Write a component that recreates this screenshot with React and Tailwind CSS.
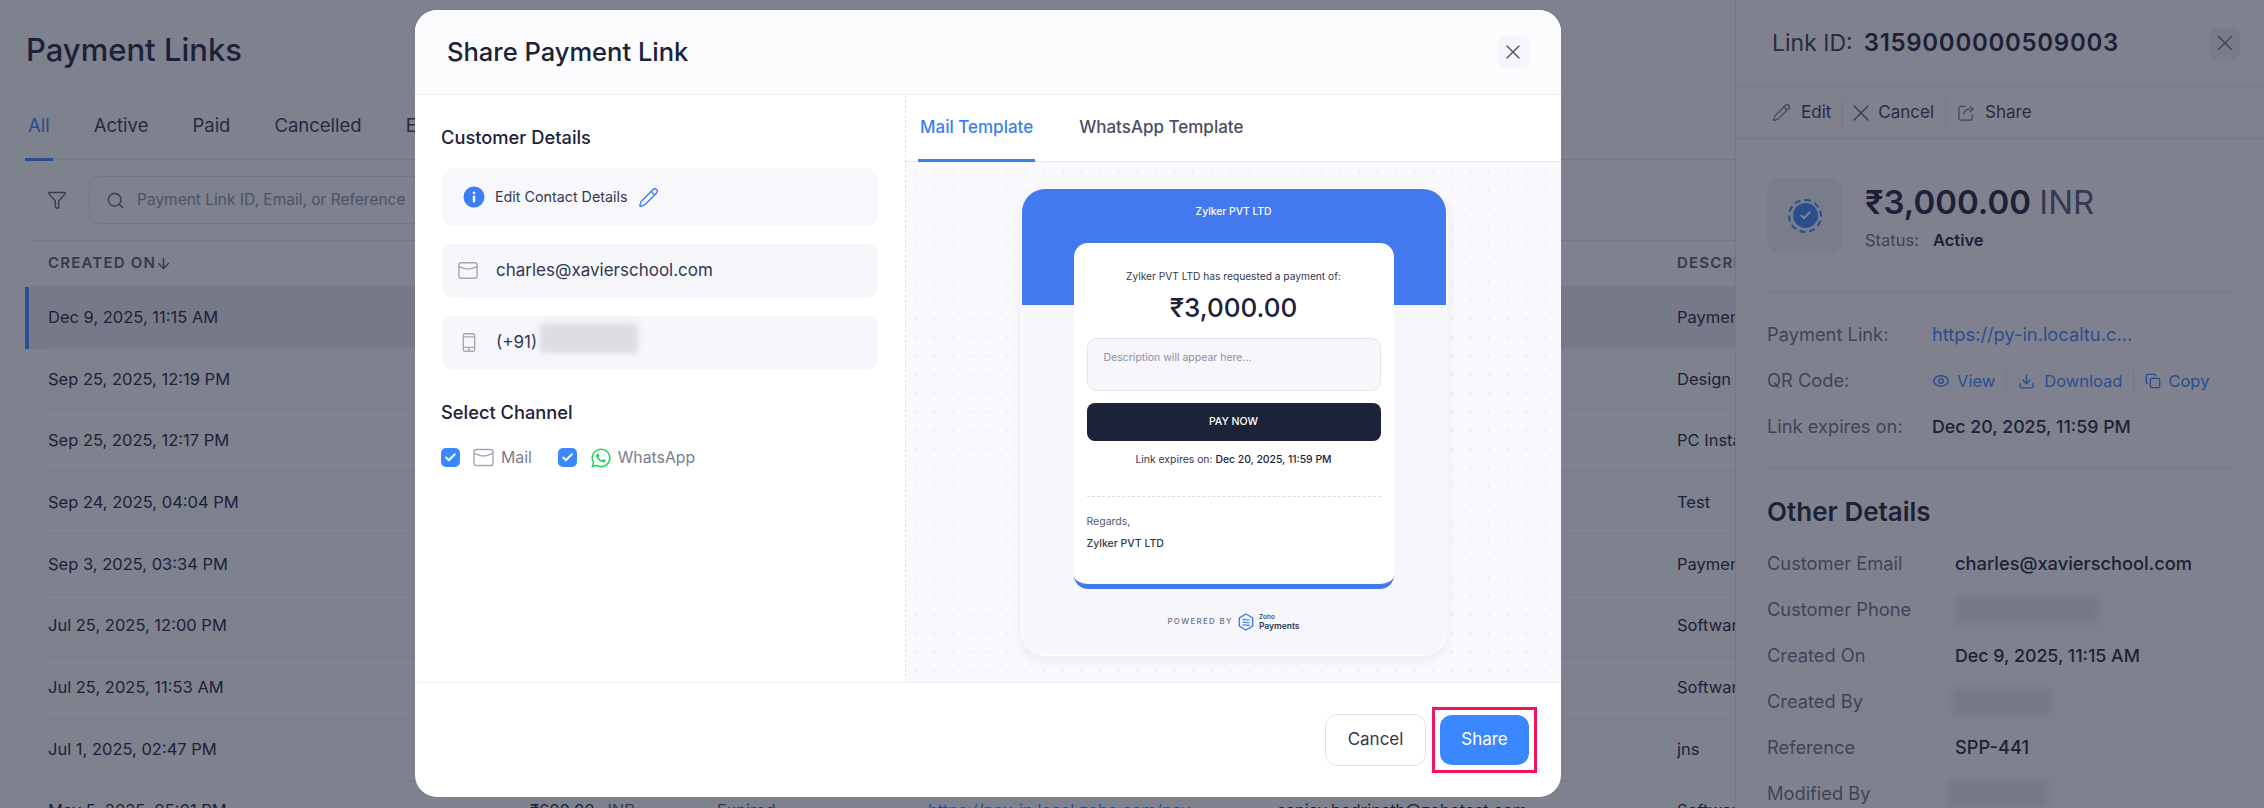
import React from "react";
import { ArrowDown, Check, Copy, Download, Eye, Funnel, Pencil, Search, X } from "lucide-react";
import { FaWhatsapp } from "react-icons/fa";

const tabs = ["All", "Active", "Paid", "Cancelled", "Expired"];

const rows = [
  { date: "Dec 9, 2025, 11:15 AM", desc: "Payment", selected: true },
  { date: "Sep 25, 2025, 12:19 PM", desc: "Design" },
  { date: "Sep 25, 2025, 12:17 PM", desc: "PC Install" },
  { date: "Sep 24, 2025, 04:04 PM", desc: "Test" },
  { date: "Sep 3, 2025, 03:34 PM", desc: "Payment" },
  { date: "Jul 25, 2025, 12:00 PM", desc: "Software" },
  { date: "Jul 25, 2025, 11:53 AM", desc: "Software" },
  { date: "Jul 1, 2025, 02:47 PM", desc: "jns" },
  {
    date: "May 5, 2025, 05:01 PM",
    amount: "₹600.00",
    status: "Expired",
    link: "https://pay-in.local.zoho.com/pay",
    email: "sanjay.badrinath@zohotest.com",
    desc: "Software",
  },
];

const MailIcon = ({ className }) => (
  <svg viewBox="0 0 22 20" fill="none" stroke="currentColor" strokeWidth="1.5" className={className}>
    <rect x="1" y="1.5" width="20" height="17" rx="2.5" />
    <path d="M1 5.5c3 1.6 6.5 3 10 3s7-1.400 10-3" />
  </svg>
);

const PhoneIcon = ({ className }) => (
  <svg viewBox="0 0 16 22" fill="none" stroke="currentColor" strokeWidth="1.5" className={className}>
    <rect x="1.500" y="1" width="13" height="20" rx="2" />
    <path d="M1.500 4.500h13M1.500 16.500h13" />
    <circle cx="8" cy="18.800" r="0.600" fill="currentColor" />
  </svg>
);

const InfoIcon = () => (
  <svg viewBox="0 0 22 22" className="h-[22px] w-[22px] shrink-0">
    <circle cx="11" cy="11" r="10.500" fill="#3b7ff5" />
    <circle cx="11" cy="6.800" r="1.400" fill="#fff" />
    <rect x="9.800" y="9.600" width="2.400" height="6.800" rx="1" fill="#fff" />
  </svg>
);

const ShareIcon = () => (
  <svg viewBox="0 0 18 18" fill="none" stroke="currentColor" strokeWidth="1.3" className="h-[17px] w-[17px]">
    <path d="M8 2.500H3a2 2 0 0 0-2 2V15a2 2 0 0 0 2 2h10a2 2 0 0 0 2-2v-4" />
    <path d="M6 11c.5-3.500 3-5.500 7-5.500M12.500 2.500l3.500 3-3.500 3" />
  </svg>
);

const ZohoLogo = () => (
  <svg viewBox="0 0 18 20" fill="none" className="h-[18px] w-[16px]">
    <path d="M9 1l7.500 4.300v9.400L9 19l-7.500-4.300V5.300z" stroke="#3b7ff5" strokeWidth="1.600" />
    <path d="M5 7.500c3-1.500 5 1.500 8 0M5 10.500c3-1.500 5 1.500 8 0M5 13.500c3-1.500 5 1.500 8 0" stroke="#3b7ff5" strokeWidth="1.300" />
  </svg>
);

const Checkbox = () => (
  <span className="flex h-[19px] w-[19px] items-center justify-center rounded-[5px] bg-[#3b87ff]">
    <Check size={13} strokeWidth={3.500} className="text-white" />
  </span>
);

const DetailRow = ({ label, width, children }) => (
  <div className="flex h-[46px] items-center">
    <span className={`${width} shrink-0 text-[#6b6f84]`}>{label}</span>
    {children}
  </div>
);

const PageBehind = () => (
  <main className="h-full min-w-0 flex-1 overflow-hidden bg-[#fdfdff] whitespace-nowrap text-[#1c2237]">
    <h1 className="flex h-[100px] items-center pl-[26px] text-[31px] font-medium">Payment Links</h1>

    <div className="ml-[25px] flex h-[60px] gap-[38px] border-b border-[#e6e7ee] text-[18.500px]">
      {tabs.map((t, i) => (
        <div
          key={t}
          className={`h-[61px] border-b-[3px] px-[3px] pt-[12px] ${i === 0 ? "border-[#3b87ff] text-[#3b87ff]" : "border-transparent text-[#33374e]"}`}
        >
          {t}
        </div>
      ))}
    </div>

    <div className="ml-[29px] flex h-[81px] items-center gap-[22px] border-b border-[#e6e7ee] pl-[18px]">
      <Funnel size={20} strokeWidth={1.700} className="text-[#5a5e75]" />
      <div className="flex h-[48px] w-[640px] items-center gap-[12px] rounded-[10px] border border-[#e3e4ec] pl-[16px] text-[15.500px] text-[#8d90a3]">
        <Search size={19} className="text-[#6b6f84]" />
        Payment Link ID, Email, or Reference
      </div>
    </div>

    <div className="ml-[29px] flex h-[46px] items-center border-b border-[#e6e7ee] pl-[19px] text-[15px] font-semibold tracking-[1.200px] text-[#55596f]">
      <span className="flex w-[1629px] shrink-0 items-center">
        CREATED ON
        <ArrowDown size={17} className="-ml-[1px]" />
      </span>
      <span>DESCRIPTION</span>
    </div>

    {rows.map((r) => (
      <div
        key={r.date}
        className={`ml-[25px] flex h-[61.700px] items-center border-l-4 pl-[19px] text-[16.500px] ${r.selected ? "border-l-[#3b87ff] bg-[#ebecf2]" : "border-l-transparent"}`}
      >
        <div className="flex h-full flex-1 items-center border-b border-[#eef0f5]">
          <span className="w-[482px] shrink-0">{r.date}</span>
          <span className="w-[187px] shrink-0">
            {r.amount && (
              <>
                {r.amount} <span className="ml-[8px] text-[#55596f]">INR</span>
              </>
            )}
          </span>
          <span className="w-[211px] shrink-0 text-[#55596f]">{r.status}</span>
          <span className="w-[349px] shrink-0 text-[#3b87ff]">{r.link}</span>
          <span className="w-[400px] shrink-0">{r.email}</span>
          <span className="shrink-0">{r.desc}</span>
        </div>
      </div>
    ))}
  </main>
);

const DetailPanel = () => (
  <aside className="flex h-full w-[529px] shrink-0 flex-col border-l border-[#e6e7ee] bg-white whitespace-nowrap text-[#1c2237]">
    <div className="flex h-[86px] shrink-0 items-center justify-between pr-[24px] pl-[36px] text-[23px]">
      <div className="flex items-baseline">
        <span className="text-[#33374e]">Link ID:</span>
        <span className="ml-[11px] text-[24px] font-semibold tracking-[0.700px]">3159000000509003</span>
      </div>
      <span className="flex h-[31px] w-[31px] items-center justify-center rounded-[8px] bg-[#eeeff5]">
        <X size={26} strokeWidth={1.300} className="text-[#6b6f84]" />
      </span>
    </div>

    <div className="flex h-[53px] shrink-0 items-center border-y border-[#e6e7ee] pl-[36px] text-[17px] text-[#33374e]">
      <span className="flex items-center gap-[10px] pr-[11px]">
        <Pencil size={19} className="text-[#6b6f84]" strokeWidth={1.400} />
        Edit
      </span>
      <span className="flex h-[30px] items-center gap-[10px] border-l border-[#e6e7ee] px-[11px]">
        <X size={28} className="-mx-[7px] text-[#55596f]" strokeWidth={1.200} />
        Cancel
      </span>
      <span className="flex h-[30px] items-center gap-[10px] border-l border-[#e6e7ee] pl-[12px] [&>svg]:text-[#6b6f84]">
        <ShareIcon />
        Share
      </span>
    </div>

    <div className="pr-[28px] pl-[31px] text-[18.300px]">
      <div className="flex h-[154px] gap-[22px] border-b border-[#e6e7ee] pt-[39px]">
        <div className="flex h-[75px] w-[76px] items-center justify-center rounded-[14px] bg-[#f0f1f6]">
          <span className="flex h-[34px] w-[34px] items-center justify-center rounded-full border-2 border-dashed border-[#3b87ff]">
            <span className="flex h-[25px] w-[25px] items-center justify-center rounded-full bg-[#3b87ff]">
              <Check size={13} strokeWidth={3.500} className="text-white" />
            </span>
          </span>
        </div>
        <div>
          <div className="mt-[4px] text-[33px] leading-[40px] font-semibold">
            ₹3,000.00 <span className="font-normal text-[#55596f]">INR</span>
          </div>
          <div className="mt-[6px] text-[16.500px]">
            <span className="text-[#6b6f84]">Status:</span>
            <span className="ml-[14px] font-semibold">Active</span>
          </div>
        </div>
      </div>

      <div className="border-b border-[#e6e7ee] pt-[19px] pb-[18px]">
        <DetailRow label="Payment Link:" width="w-[165px]">
          <span className="text-[#3b87ff]">https://py-in.localtu.c...</span>
        </DetailRow>
        <DetailRow label="QR Code:" width="w-[165px]">
          <div className="flex items-center text-[16.500px] text-[#3b87ff]">
            <span className="flex items-center gap-[7px] pr-[11px]">
              <Eye size={18} />
              View
            </span>
            <span className="flex items-center gap-[9px] border-l border-[#e6e7ee] px-[11px]">
              <Download size={17} />
              Download
            </span>
            <span className="flex items-center gap-[7px] border-l border-[#e6e7ee] pl-[11px]">
              <Copy size={16} />
              Copy
            </span>
          </div>
        </DetailRow>
        <DetailRow label="Link expires on:" width="w-[165px]">
          <span className="text-[17.800px] font-medium">Dec 20, 2025, 11:59 PM</span>
        </DetailRow>
      </div>

      <h2 className="mt-[28px] mb-[14px] text-[26px] leading-[30px] font-semibold">Other Details</h2>
      <DetailRow label="Customer Email" width="w-[188px]">
        <span className="font-medium">charles@xavierschool.com</span>
      </DetailRow>
      <DetailRow label="Customer Phone" width="w-[188px]">
        <div className="h-[30px] w-[144px] bg-[#e6e7ec] blur-[5px]" />
      </DetailRow>
      <DetailRow label="Created On" width="w-[188px]">
        <span className="text-[17.800px] font-medium">Dec 9, 2025, 11:15 AM</span>
      </DetailRow>
      <DetailRow label="Created By" width="w-[188px]">
        <div className="-ml-[3px] h-[28px] w-[100px] bg-[#e6e7ec] blur-[5px]" />
      </DetailRow>
      <DetailRow label="Reference" width="w-[188px]">
        <span className="font-medium">SPP-441</span>
      </DetailRow>
      <DetailRow label="Modified By" width="w-[188px]">
        <div className="-ml-[8px] h-[28px] w-[102px] bg-[#e6e7ec] blur-[5px]" />
      </DetailRow>
    </div>
  </aside>
);

const MailPreview = () => (
  <div className="h-[468px] w-[426px] overflow-hidden rounded-[24px] border border-white bg-[#f6f6fb] shadow-[0_4px_14px_rgba(28,34,55,0.07)]">
    <div className="flex h-[116px] justify-center bg-[#4279ee] pt-[14px] text-[10.300px] leading-[16px] font-medium text-white">
      Zylker PVT LTD
    </div>
    <div className="relative mx-auto -mt-[62px] h-[346px] w-[320px] rounded-[14px] border-b-[5px] border-[#4279ee] bg-white px-[13px] pt-[26px]">
      <p className="text-center text-[10.200px] leading-[14px] text-[#33374e]">Zylker PVT LTD has requested a payment of:</p>
      <p className="mt-[9px] text-center text-[26px] leading-[32px] font-medium text-[#1c2237]">₹3,000.00</p>
      <div className="mt-[14px] h-[53px] rounded-[10px] border border-[#e4e4ec] bg-[#f6f6fb] pt-[12px] pl-[16px] text-[10.500px] leading-[14px] text-[#8d90a3]">
        Description will appear here...
      </div>
      <div className="mt-[12px] flex h-[38px] items-center justify-center rounded-[8px] bg-[#1c2237] text-[10.500px] font-medium text-white">
        PAY NOW
      </div>
      <p className="mt-[11px] text-center text-[10.400px] leading-[16px] text-[#33374e]">
        Link expires on: <span className="font-medium text-[#1c2237]">Dec 20, 2025, 11:59 PM</span>
      </p>
      <div className="mt-[28px] border-t border-dashed border-[#dcdde6]" />
      <p className="mt-[18px] text-[10.500px] leading-[14px] text-[#55596f]">Regards,</p>
      <p className="mt-[8px] text-[10.500px] leading-[14px] font-medium text-[#33374e]">Zylker PVT LTD</p>
    </div>
    <div className="mt-[23px] flex h-[20px] items-center justify-center gap-[5px]">
      <span className="text-[7.800px] font-medium tracking-[1.400px] text-[#6b6f84]">POWERED BY</span>
      <ZohoLogo />
      <span className="flex flex-col text-[#33374e]">
        <span className="text-[6.500px] leading-[8px] font-medium">Zoho</span>
        <span className="text-[8.500px] leading-[10px] font-semibold">Payments</span>
      </span>
    </div>
  </div>
);

const ShareModal = () => (
  <div className="absolute top-[10px] left-[415px] z-20 flex h-[787px] w-[1146px] flex-col overflow-hidden rounded-[22px] bg-white whitespace-nowrap text-[#1c2237]">
    <div className="flex h-[85px] shrink-0 items-center justify-between border-b border-[#eff0f4] bg-[#fcfcfe] px-[32px]">
      <h2 className="text-[25.500px] font-medium">Share Payment Link</h2>
      <span className="flex h-[32px] w-[32px] items-center justify-center rounded-[8px] bg-[#f5f5fa]">
        <X size={24} strokeWidth={1.500} className="text-[#55596f]" />
      </span>
    </div>

    <div className="flex h-[588px] shrink-0 border-b border-[#eff0f4]">
      <div className="w-[491px] shrink-0 border-r border-dashed border-[#e0e1ea] pt-[30px] pr-[26px] pl-[26px]">
        <h3 className="text-[18.300px] leading-[24px] font-medium">Customer Details</h3>
        <div className="mt-[19px] flex h-[58px] items-center rounded-[14px] bg-[#f8f8fc] pl-[22px] text-[14.300px] text-[#33374e]">
          <InfoIcon />
          <span className="ml-[10px]">Edit Contact Details</span>
          <Pencil size={21} strokeWidth={1.600} className="ml-[10px] text-[#3b7ff5]" />
        </div>
        <div className="mx-px mt-[18px] flex h-[53px] items-center gap-[18px] rounded-[10px] bg-[#f6f6fb] pl-[16px] text-[17px] text-[#33374e]">
          <MailIcon className="h-[19px] w-[20px] text-[#a5a6b4]" />
          charles@xavierschool.com
        </div>
        <div className="mx-px mt-[19px] flex h-[53px] items-center rounded-[10px] bg-[#f6f6fb] pl-[20px] text-[17px] text-[#33374e]">
          <PhoneIcon className="h-[21px] w-[14px] text-[#a5a6b4]" />
          <span className="ml-[20px]">(+91)</span>
          <div className="-mt-[10px] ml-[3px] h-[30px] w-[98px] bg-[#dcdde3] blur-[3px]" />
        </div>
        <h3 className="mt-[31px] text-[18.300px] leading-[24px] font-medium">Select Channel</h3>
        <div className="mt-[22px] flex items-center text-[15.800px] text-[#7b7d8d]">
          <Checkbox />
          <MailIcon className="ml-[13px] h-[19px] w-[21px] text-[#a5a6b4]" />
          <span className="ml-[7px]">Mail</span>
          <span className="ml-[26px]">
            <Checkbox />
          </span>
          <FaWhatsapp className="ml-[13px] h-[22px] w-[22px] text-[#25d366]" />
          <span className="ml-[6px]">WhatsApp</span>
        </div>
      </div>

      <div className="flex min-w-0 flex-1 flex-col">
        <div className="flex h-[67px] shrink-0 gap-[42px] border-b border-[#e9eaf0] pl-[12px] text-[17px] font-medium">
          <div className="h-[67px] border-b-[3px] border-[#3b7ff5] px-[2px] pt-[20px] text-[#3b7ff5]">Mail Template</div>
          <div className="px-[2px] pt-[20px] text-[#4a4e63]">WhatsApp Template</div>
        </div>
        <div className="flex flex-1 justify-center bg-[#f9f9fe] bg-[radial-gradient(#ececf4_1px,transparent_1px)] bg-size-[18.500px_18.500px] pt-[26px]">
          <MailPreview />
        </div>
      </div>
    </div>

    <div className="flex flex-1 items-center justify-end gap-[6px] pr-[24px]">
      <button className="h-[52px] w-[101px] rounded-[12px] border border-[#e0e0ea] bg-white text-[17px] text-[#33374e]">Cancel</button>
      <div className="border-[3px] border-[#f5135a] p-[5px]">
        <button className="block h-[50px] w-[89px] rounded-[12px] bg-[#3b87ff] text-[17px] text-white">Share</button>
      </div>
    </div>
  </div>
);

export default function App() {
  return (
    <div className="relative flex h-[808px] w-full overflow-hidden font-['Inter','Noto_Sans',sans-serif]">
      <PageBehind />
      <DetailPanel />
      <div className="absolute inset-0 z-10 bg-[#1c2237]/[0.565]" />
      <ShareModal />
    </div>
  );
}
